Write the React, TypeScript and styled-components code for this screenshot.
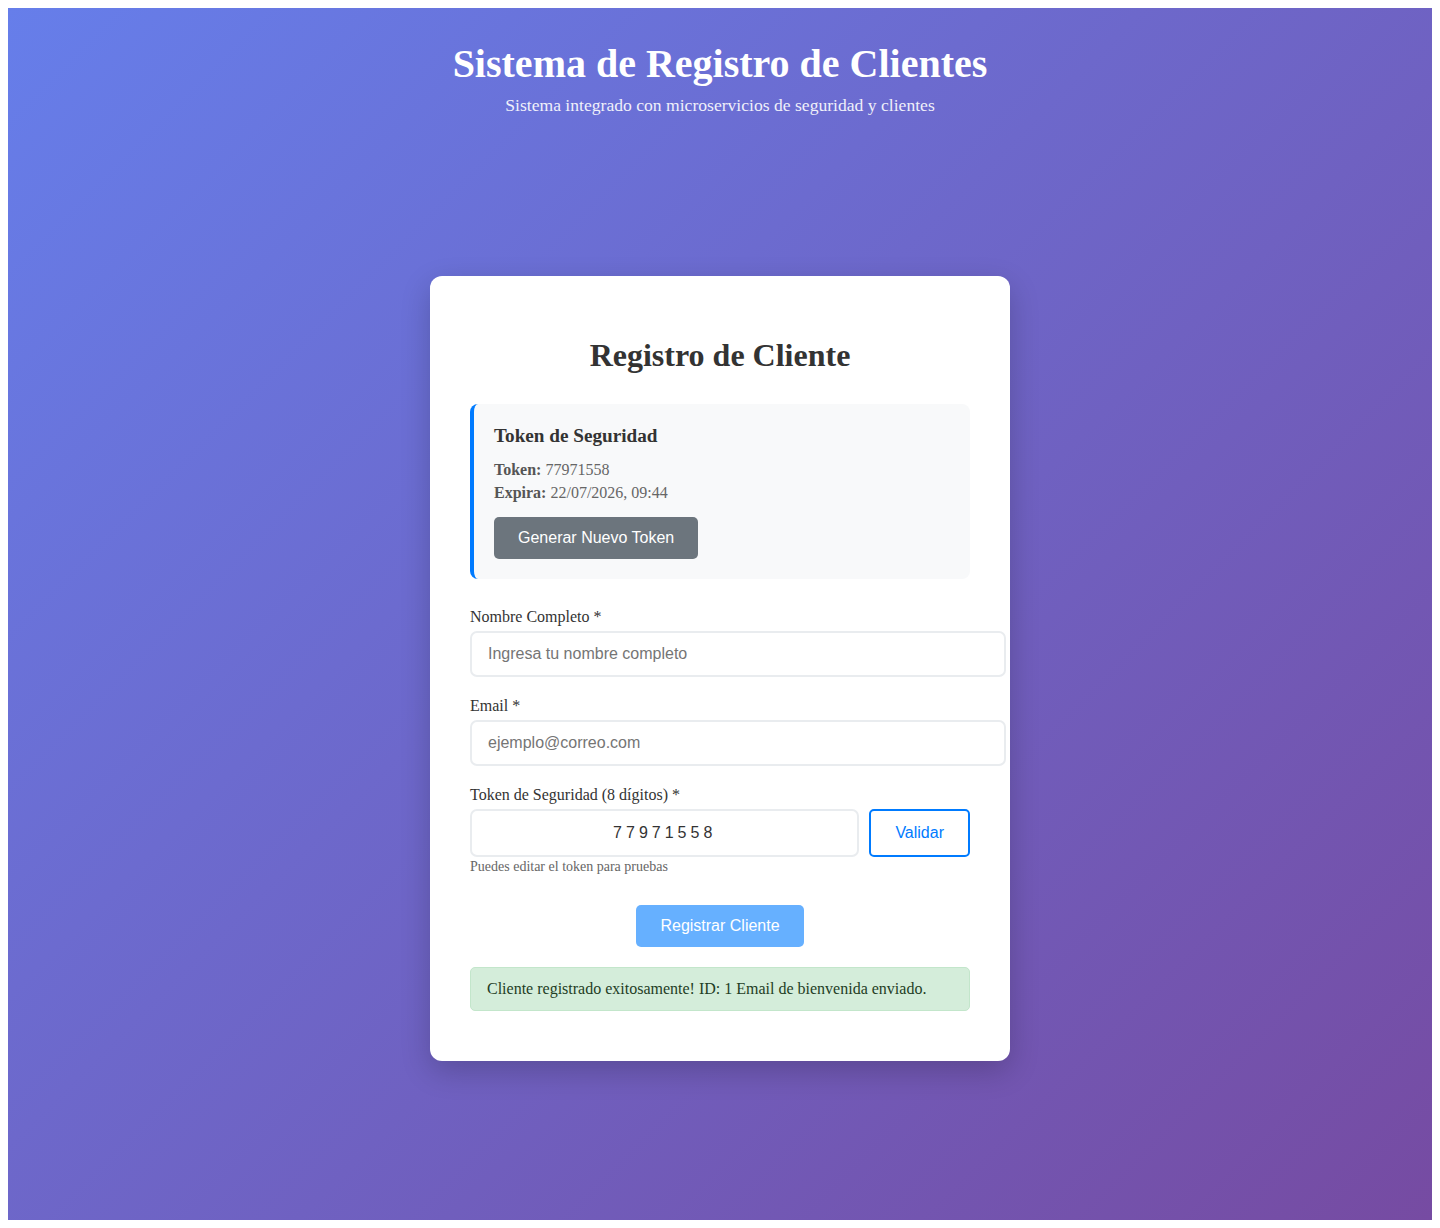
import React, { useState } from 'react';
import styled, { createGlobalStyle } from 'styled-components';

const GlobalStyle = createGlobalStyle`
  body {
    margin: 8px;
    font-family: "Liberation Serif", "Times New Roman", serif;
  }
`;

const Page = styled.div`
  min-height: calc(100vh - 16px);
  box-sizing: border-box;
  padding: 20px;
  display: flex;
  flex-direction: column;
  background: linear-gradient(135deg, #667eea 0%, #764ba2 100%);
`;

const Header = styled.header`
  text-align: center;
  color: #ffffff;
  margin-bottom: 20px;
`;

const Title = styled.h1`
  margin: 12px 0 8px;
  font-size: 40px;
  font-weight: bold;
`;

const Subtitle = styled.p`
  margin: 0;
  font-size: 17.6px;
  opacity: 0.9;
`;

const Main = styled.main`
  flex: 1;
  display: flex;
  align-items: center;
  justify-content: center;
`;

const Card = styled.div`
  width: 500px;
  padding: 40px;
  background: #ffffff;
  border-radius: 12px;
  box-shadow: 0 10px 30px rgba(0, 0, 0, 0.2);
`;

const CardTitle = styled.h2`
  margin: 21px 0 30px;
  text-align: center;
  color: #333333;
  font-size: 32px;
  font-weight: bold;
`;

const TokenBox = styled.div`
  background: #f8f9fa;
  border-left: 4px solid #007bff;
  border-radius: 8px;
  padding: 21px 20px 20px;
  margin-bottom: 29px;
`;

const TokenTitle = styled.h3`
  margin: 0 0 14px;
  font-size: 19.2px;
  color: #333333;
`;

const TokenLine = styled.p`
  margin: 0 0 5px;
  font-size: 16px;
  color: #666666;

  strong {
    color: #555555;
  }
`;

const Button = styled.button<{ $variant: 'secondary' | 'outline' | 'primary' }>`
  font-family: "Liberation Sans", Arial, sans-serif;
  font-size: 16px;
  padding: 12px 24px;
  border-radius: 5px;
  cursor: pointer;
  border: ${p => (p.$variant === 'outline' ? '2px solid #007bff' : 'none')};
  background: ${p =>
    p.$variant === 'secondary' ? '#6c757d' : p.$variant === 'outline' ? '#ffffff' : '#66b0ff'};
  color: ${p => (p.$variant === 'outline' ? '#007bff' : '#ffffff')};
`;

const RegenButton = styled(Button)`
  margin-top: 10px;
`;

const FormGroup = styled.div`
  margin-bottom: 20px;
`;

const Label = styled.label`
  display: block;
  margin-bottom: 5px;
  font-size: 16px;
  color: #333333;
`;

const Input = styled.input<{ $token?: boolean }>`
  width: 100%;
  padding: ${p => (p.$token ? '13px 16px' : '12px 16px')};
  border: 2px solid #e9ecef;
  border-radius: 7px;
  font-family: "Liberation Sans", Arial, sans-serif;
  font-size: 16px;
  color: #333333;
  text-align: ${p => (p.$token ? 'center' : 'left')};
  letter-spacing: ${p => (p.$token ? '4px' : 'normal')};
  outline: none;

  &::placeholder {
    color: #757575;
  }
`;

const TokenRow = styled.div`
  display: flex;
  gap: 10px;

  ${Input} {
    flex: 1;
    min-width: 0;
    width: auto;
  }
`;

const Hint = styled.small`
  display: block;
  margin-top: 2px;
  font-size: 14px;
  color: #666666;
`;

const Actions = styled.div`
  display: flex;
  justify-content: center;
  margin-top: 30px;
`;

const SuccessMessage = styled.div`
  margin-top: 20px;
  margin-bottom: 10px;
  padding: 12px 16px;
  background: #d4edda;
  border: 1px solid #c3e6cb;
  border-radius: 5px;
  color: #1f3d25;
  font-size: 16px;
`;

export default function App() {
  const [token, setToken] = useState('77971558');

  return (
    <>
      <GlobalStyle />
      <Page>
        <Header>
          <Title>Sistema de Registro de Clientes</Title>
          <Subtitle>Sistema integrado con microservicios de seguridad y clientes</Subtitle>
        </Header>
        <Main>
          <Card>
            <CardTitle>Registro de Cliente</CardTitle>
            <TokenBox>
              <TokenTitle>Token de Seguridad</TokenTitle>
              <TokenLine>
                <strong>Token:</strong> 77971558
              </TokenLine>
              <TokenLine>
                <strong>Expira:</strong> 22/07/2026, 09:44
              </TokenLine>
              <RegenButton type="button" $variant="secondary">
                Generar Nuevo Token
              </RegenButton>
            </TokenBox>

            <FormGroup>
              <Label htmlFor="nombre">Nombre Completo *</Label>
              <Input id="nombre" placeholder="Ingresa tu nombre completo" />
            </FormGroup>

            <FormGroup>
              <Label htmlFor="email">Email *</Label>
              <Input id="email" type="email" placeholder="ejemplo@correo.com" />
            </FormGroup>

            <FormGroup>
              <Label htmlFor="token">Token de Seguridad (8 dígitos) *</Label>
              <TokenRow>
                <Input
                  id="token"
                  $token
                  maxLength={8}
                  value={token}
                  onChange={e => setToken(e.target.value)}
                />
                <Button type="button" $variant="outline">
                  Validar
                </Button>
              </TokenRow>
              <Hint>Puedes editar el token para pruebas</Hint>
            </FormGroup>

            <Actions>
              <Button type="submit" $variant="primary">
                Registrar Cliente
              </Button>
            </Actions>

            <SuccessMessage>
              Cliente registrado exitosamente! ID: 1 Email de bienvenida enviado.
            </SuccessMessage>
          </Card>
        </Main>
      </Page>
    </>
  );
}
